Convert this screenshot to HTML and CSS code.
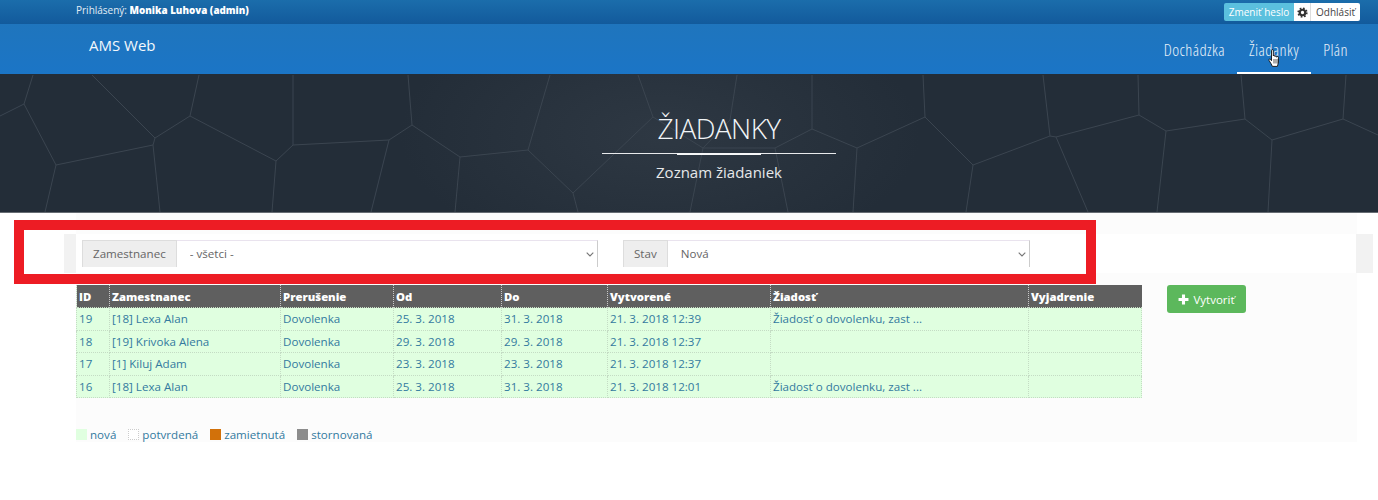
FILE: index.html
```html
<!DOCTYPE html>
<html lang="sk">
<head>
    <meta charset="UTF-8">
    <meta name="viewport" content="width=device-width, initial-scale=1.0">
    <title>AMS Web - Žiadanky</title>
    <link rel="stylesheet" href="styles.css">
</head>
<body>
<div class="topbar">
  <div class="user-info">Prihlásený: <b>Monika Luhova (admin)</b></div>
  <div class="user-actions">
    <a class="btn-mini btn-info" href="#">Zmeniť heslo</a>
    <a class="btn-mini btn-gear" href="#" aria-label="Nastavenia">
      <svg width="11" height="11" viewBox="0 0 12 12">
        <circle cx="6" cy="6" r="3" fill="none" stroke="#333" stroke-width="2.4"/>
        <circle cx="6" cy="6" r="4.7" fill="none" stroke="#333" stroke-width="1.8" stroke-dasharray="1.85 1.84"/>
      </svg>
    </a>
    <a class="btn-mini" href="#">Odhlásiť</a>
  </div>
</div>
<nav class="navbar">
  <a class="brand" href="#">AMS Web</a>
  <div class="nav-links">
    <a href="#">Dochádzka</a>
    <a class="active" href="#">Žiadanky</a>
    <a href="#">Plán</a>
  </div>
  <!-- mouse pointer caught in the screenshot -->
  <svg class="pointer" width="14" height="19" viewBox="0 0 14 19">
    <path d="M3.5 1.4c0-1 1.8-1 1.8 0V7c0-.9 1.7-.9 1.7 0v.6c0-.9 1.7-.9 1.7 0v.6c0-.9 1.7-.9 1.700 0V13c0 1.7-.7 2.500-1 4.400H4.400C3.700 15.400 2.500 14 1.100 11.600c-.7-1.200.6-2.100 1.400-1.200l1 1.300z" fill="#fff" stroke="#111" stroke-width=".9" stroke-linejoin="round"/>
    <path d="M6 10v4.500M8 10v4.500M10 10v4.500" stroke="#111" stroke-width=".7" fill="none"/>
  </svg>
</nav>
<header class="hero">
  <svg class="hero-lines" width="1378" height="138" viewBox="0 74 1378 138">
    <path d="M33 75L24 104L0 116M24 104L56 165L153 145L160 212M56 165L45 212M92 75L155 138L153 145M155 138L190 116L199 75M190 116L276 161L272 212M276 161L293 145L293 75M293 145L389 140L371 212M389 140L412 125L408 75M412 125L460 157L528 150M460 157L455 212M550 75L528 150L573 193L578 212M573 193L653 117L638 75M653 117L703 148L690 212M703 148L730 120L737 75M703 148L775 148L788 212M775 148L812 129L812 75M812 129L857 148L853 212M857 148L925 117L923 75M925 117L973 165L966 212M973 165L1050 136L1043 75M1050 136L1056 137L1088 212M1056 137L1139 115L1138 75M1139 115L1166 131L1157 212M1166 131L1245 119L1241 75M1245 119L1272 140L1268 212M1272 140L1343 119L1346 75M1343 119L1378 135"/>
  </svg>
  <div class="hero-text">
    <h1>ŽIADANKY</h1>
    <div class="hero-rule"></div>
    <p>Zoznam žiadaniek</p>
  </div>
</header>
<main class="content">
  <div class="panel">
    <form class="filter-row">
      <div class="filter-inner">
        <div class="input-group group-employee">
          <span class="addon">Zamestnanec</span>
          <select title="Zamestnanec"><option>- všetci -</option></select>
        </div>
        <div class="input-group group-state">
          <span class="addon">Stav</span>
          <select title="Stav"><option>Nová</option></select>
        </div>
      </div>
    </form>
    <div class="list-row">
      <table class="requests">
        <colgroup>
          <col class="c-id"><col class="c-emp"><col class="c-type"><col class="c-from"><col class="c-to"><col class="c-created"><col class="c-req"><col class="c-note">
        </colgroup>
        <thead>
          <tr><th>ID</th><th>Zamestnanec</th><th>Prerušenie</th><th>Od</th><th>Do</th><th>Vytvorené</th><th>Žiadosť</th><th>Vyjadrenie</th></tr>
        </thead>
        <tbody>
          <tr><td>19</td><td>[18] Lexa Alan</td><td>Dovolenka</td><td>25. 3. 2018</td><td>31. 3. 2018</td><td>21. 3. 2018 12:39</td><td>Žiadosť o dovolenku, zast ...</td><td></td></tr>
          <tr><td>18</td><td>[19] Krivoka Alena</td><td>Dovolenka</td><td>29. 3. 2018</td><td>29. 3. 2018</td><td>21. 3. 2018 12:37</td><td></td><td></td></tr>
          <tr><td>17</td><td>[1] Kiluj Adam</td><td>Dovolenka</td><td>23. 3. 2018</td><td>23. 3. 2018</td><td>21. 3. 2018 12:37</td><td></td><td></td></tr>
          <tr><td>16</td><td>[18] Lexa Alan</td><td>Dovolenka</td><td>25. 3. 2018</td><td>31. 3. 2018</td><td>21. 3. 2018 12:01</td><td>Žiadosť o dovolenku, zast ...</td><td></td></tr>
        </tbody>
      </table>
      <a class="btn-create" href="#">
        <svg width="11" height="11" viewBox="0 0 10 10"><path d="M5 0.500v9M0.500 5h9" stroke="#fff" stroke-width="2.800" fill="none"/></svg>
        Vytvoriť
      </a>
    </div>
    <div class="legend">
      <span class="legend-item"><i class="swatch s-new"></i>nová</span>
      <span class="legend-item"><i class="swatch s-ok"></i>potvrdená</span>
      <span class="legend-item"><i class="swatch s-rejected"></i>zamietnutá</span>
      <span class="legend-item"><i class="swatch s-cancelled"></i>stornovaná</span>
    </div>
  </div>
  <div class="annotation"></div>
</main>
</body>
</html>
```

FILE: styles.css
```css
body {
    margin: 0;
    background: #fff;
    font-family: 'Open Sans', Arial, sans-serif;
    font-size: 11.6px;
    color: #555;
}
a {
    text-decoration: none;
}
.topbar {
    display: flex;
    justify-content: space-between;
    height: 24px;
    box-sizing: border-box;
    padding: 3px 18px 0 76px;
    background: linear-gradient(#1b6dab, #125a9c);
}
.user-info {
    color: #e3edf5;
    font-size: 10px;
    line-height: 14px;
}
.user-info b {
    color: #fff;
    font-size: 9.8px;
    font-weight: 800;
}
.user-actions {
    display: flex;
    height: 18px;
}
.btn-mini {
    display: flex;
    align-items: center;
    justify-content: center;
    width: 49px;
    background: #fff;
    color: #444;
    font-size: 10px;
    border-radius: 0 2px 2px 0;
}
.btn-gear {
    width: 17px;
    border-right: 1px solid #ddd;
    box-sizing: border-box;
    border-radius: 0;
}
.btn-info {
    width: 70px;
    background: #5bc0de;
    color: #fff;
    border-radius: 2px 0 0 2px;
}
.navbar {
    position: relative;
    display: flex;
    justify-content: space-between;
    height: 50px;
    padding: 0 18px 0 89px;
    background: linear-gradient(#1f75bd, #1b75c6);
}
.brand {
    color: #f3f8fc;
    font-size: 15px;
    line-height: 42px;
}
.nav-links {
    display: flex;
}
.nav-links a {
    box-sizing: border-box;
    height: 50px;
    padding: 0 12px;
    color: #e8f1f9;
    font-size: 16.5px;
    font-weight: 300;
    font-stretch: 75%;
    letter-spacing: 0.4px;
    line-height: 51px;
}
.nav-links a.active {
    border-bottom: 2px solid #fff;
}
.pointer {
    position: absolute;
    left: 1268px;
    top: 25px;
}
.hero {
    position: relative;
    height: 138px;
    padding-left: 60px;
    background: radial-gradient(ellipse 260px 130px at 660px 60px, #2e3843, #232d38);
    border-bottom: 1px solid #666c73;
    text-align: center;
    color: #fff;
}
.hero-lines {
    position: absolute;
    left: 0;
    top: 0;
}
.hero-lines path {
    fill: none;
    stroke: #3b4550;
    stroke-width: 1;
}
.hero-text {
    position: relative;
    width: 234px;
    margin: 0 auto;
    padding-top: 34px;
}
.hero-text h1 {
    margin: 0;
    font-size: 28px;
    font-weight: 300;
    font-stretch: 92%;
    letter-spacing: -0.6px;
    line-height: 40px;
    color: #f2f5f7;
}
.hero-rule {
    position: relative;
    height: 1px;
    margin-top: 5px;
    background: #e8eaec;
}
.hero-rule::after {
    content: "";
    position: absolute;
    left: 75px;
    top: 0;
    width: 84px;
    height: 2px;
    background: #f6f7f8;
}
.hero-text p {
    margin: 8px 0 0 0;
    font-size: 15px;
    line-height: 20px;
    color: #e6e8ea;
}
.content {
    position: relative;
}
.panel {
    width: 1281px;
    height: 229px;
    box-sizing: border-box;
    margin-left: 76px;
    padding-top: 21px;
    background: #fcfcfc;
}
.filter-row {
    height: 39px;
    margin: 0 -16px 0 -12px;
    padding: 0 17px 0 12px;
    background: #f2f2f2;
}
.filter-inner {
    display: flex;
    height: 39px;
    box-sizing: border-box;
    padding: 6px 0 0 6px;
    background: #fff;
}
.input-group {
    display: flex;
    height: 27px;
}
.group-employee {
    width: 516px;
    margin-right: 25px;
}
.group-state {
    width: 407px;
}
.addon {
    padding: 0 10px;
    background: #eee;
    border: 1px solid #ddd;
    border-bottom: 0;
    line-height: 26px;
    color: #666;
}
.input-group select {
    flex: 1;
    min-width: 0;
    padding: 0 0 2px 13px;
    border: 0;
    border-top: 1px solid #e9e3ee;
    border-right: 1px solid #ccc;
    border-radius: 0;
    appearance: none;
    background: #fff url("data:image/svg+xml,%3Csvg xmlns='http://www.w3.org/2000/svg' width='8' height='5'%3E%3Cpath d='M.7.7L4 4l3.300-3.300' fill='none' stroke='%23777' stroke-width='1.100'/%3E%3C/svg%3E") no-repeat right 3px center;
    color: #666;
    font-family: inherit;
    font-size: 11.6px;
}
.list-row {
    display: flex;
    align-items: flex-start;
    margin-top: 12px;
}
.requests {
    width: 1066px;
    table-layout: fixed;
    border-collapse: collapse;
    background: #e0ffe0;
}
.c-id { width: 33px; }
.c-emp { width: 171px; }
.c-type { width: 113px; }
.c-from { width: 108px; }
.c-to { width: 106px; }
.c-created { width: 163px; }
.c-req { width: 258px; }
.requests th {
    height: 22px;
    padding: 0 2px;
    background: #5f5f5f;
    border-left: 1px dotted #c8c8c8;
    color: #fff;
    font-size: 11.3px;
    font-weight: 800;
    text-align: left;
}
.requests td {
    height: 22.5px;
    box-sizing: border-box;
    padding: 0.3px 2px 0 2px;
    border: 1px dotted #c4dcc4;
    color: #337a9f;
    font-size: 11.6px;
    white-space: nowrap;
}
.btn-create {
    display: flex;
    align-items: center;
    justify-content: center;
    gap: 4px;
    width: 79px;
    height: 28px;
    margin-left: 25px;
    background: #5cb85c;
    border-radius: 3px;
    color: #fff;
    font-size: 11.5px;
}
.legend {
    display: flex;
    margin-top: 30px;
    line-height: 13px;
    color: #337a9f;
}
.legend-item {
    display: flex;
    align-items: center;
    margin-right: 12px;
}
.swatch {
    width: 11px;
    height: 11px;
    margin-right: 3px;
}
.s-new { background: #e0ffe0; }
.s-ok { background: #fff; border: 1px dotted #ccc; box-sizing: border-box; }
.s-rejected { background: #d2710a; }
.s-cancelled { background: #8c8c8c; }
.annotation {
    position: absolute;
    left: 14px;
    top: 7px;
    width: 1082px;
    height: 64px;
    box-sizing: border-box;
    border: 10px solid #ed1c24;
}
```
